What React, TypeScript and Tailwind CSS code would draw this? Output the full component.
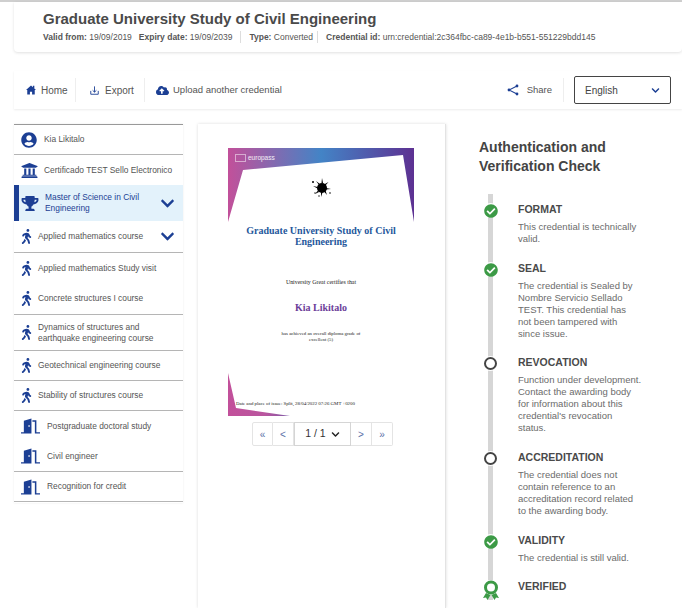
import type { ReactNode } from 'react';
import { FaCheckCircle, FaChevronDown, FaCloudUploadAlt, FaTrophy, FaUniversity, FaUserCircle, FaWalking } from 'react-icons/fa';

const blue = 'text-[#1c3f94]';

function Door() {
  return (
    <svg viewBox="0 0 20 16" className="h-[16px] w-[19px] fill-[#1c3f94]">
      <path d="M3 14.5V2.5L11 0v16H0v-1.5zM7.8 7.2h1.4v1.6H7.8z" fillRule="evenodd" />
      <path d="M12 2h4.2v12.5H20V16h-5.4V3.6H12z" />
    </svg>
  );
}

function Walker() {
  return <FaWalking className={`h-[15px] w-[11px] ${blue}`} />;
}

function NavRow({ icon, label, iconWidth, height, chevron, border = true }: {
  icon: ReactNode;
  label: string;
  iconWidth: string;
  height: string;
  chevron?: boolean;
  border?: boolean;
}) {
  return (
    <div className={`flex items-center ${height} ${border ? 'border-b border-[#b5b5b5]' : ''}`}>
      <div className={`flex shrink-0 items-center pl-[7px] ${iconWidth}`}>{icon}</div>
      <span className="flex-1 text-[8.4px] leading-[11px] text-[#555]">{label}</span>
      {chevron && <FaChevronDown className={`mr-[8px] h-[15px] w-[15px] ${blue}`} />}
    </div>
  );
}

function Check({ title, children, icon, height }: { title: string; children?: ReactNode; icon: ReactNode; height: string }) {
  return (
    <div className={`flex ${height}`}>
      <div className="w-[40px] shrink-0 pl-[5px]">
        <div className="mt-[1px] flex h-[15px] w-[15px] items-center justify-center rounded-full bg-white">{icon}</div>
      </div>
      <div className="w-[124px]">
        <h3 className="text-[10.5px] leading-[15px] font-bold text-[#4a4a4a]">{title}</h3>
        {children && <p className="mt-[4px] text-[9.5px] leading-[12px] text-[#6b6b6b]">{children}</p>}
      </div>
    </div>
  );
}

const done = <FaCheckCircle className="h-[14px] w-[14px] text-[#3c9a46]" />;
const open = <span className="block h-[13px] w-[13px] rounded-full border-2 border-[#444] bg-white" />;

export default function App() {
  return (
    <div className="h-[608px] w-[682px] overflow-hidden bg-white font-['Liberation_Sans',Arial,sans-serif]">
      <div className="h-[2px] bg-[#cfcfcf]" />
      <header className="ml-[14px] h-[50px] rounded-b-[4px] pt-[7px] pl-[29px] shadow-[0_1px_3px_rgba(0,0,0,0.12)]">
        <h1 className="text-[15px] leading-[20px] font-bold text-[#4a4a4a]">Graduate University Study of Civil Engineering</h1>
        <div className="mt-[2px] flex items-center text-[8.5px] leading-[12px] text-[#555]">
          <span><b>Valid from:</b> 19/09/2019</span>
          <span className="ml-[7px] border-r border-[#ddd] pr-[8px]"><b>Expiry date:</b> 19/09/2039</span>
          <span className="ml-[8px] border-r border-[#ddd] pr-[4px]"><b>Type:</b> Converted</span>
          <span className="ml-[8px]"><b>Credential id:</b> urn:credential:2c364fbc-ca89-4e1b-b551-551229bdd145</span>
        </div>
      </header>

      <nav className="mt-[19px] ml-[14px] flex h-[38px] items-center shadow-[0_1px_2px_rgba(0,0,0,0.08)]">
        <div className="flex h-[24px] w-[62px] items-center gap-[5px] border-r border-[#eee] pl-[12px] text-[10px] text-[#555]">
          <svg viewBox="0 0 12 12" className="h-[10px] w-[10px] fill-[#1c3f94]">
            <path d="M6 .5 0 6h1.5v5.5h3.2V8h2.6v3.5h3.2V6H12l-2-1.8V1H8.3v1.6z" />
          </svg>
          <span>Home</span>
        </div>
        <div className="flex h-[24px] w-[69px] items-center gap-[6px] border-r border-[#eee] pl-[14px] text-[10px] text-[#555]">
          <svg viewBox="0 0 12 12" className="h-[9px] w-[9px] fill-none stroke-[#1c3f94]" strokeWidth="1.2">
            <path d="M6 .5V8M3.5 5.8 6 8.2l2.5-2.4M1 6.5v4.5h10V6.5" />
          </svg>
          <span className="mt-[1px]">Export</span>
        </div>
        <div className="flex flex-1 items-center gap-[4px] pl-[11px] text-[9.5px] text-[#555]">
          <FaCloudUploadAlt className={`h-[13px] w-[13px] ${blue}`} /><span>Upload another credential</span>
        </div>
        <div className="flex h-[24px] items-center gap-[8px] border-r border-[#eee] pr-[11px] text-[9.5px] text-[#555]">
          <svg viewBox="0 0 12 12" className="h-[12px] w-[12px] fill-[#1c3f94] stroke-[#1c3f94]">
            <path d="M10 2 2 6l8 4" fill="none" strokeWidth="1.1" />
            <circle cx="10" cy="2" r="1.4" strokeWidth="0" /><circle cx="2" cy="6" r="1.4" strokeWidth="0" /><circle cx="10" cy="10" r="1.4" strokeWidth="0" />
          </svg>
          <span>Share</span>
        </div>
        <div className="mr-[11px] ml-[10px] flex h-[28px] w-[97px] items-center justify-between rounded-[2px] border border-[#444] pr-[10px] pl-[10px] text-[10px] text-[#444]">
          English
          <FaChevronDown className={`h-[9px] w-[9px] ${blue}`} />
        </div>
      </nav>

      <div className="mt-[15px] flex">
        <aside className="ml-[14px] h-[379px] w-[169px] border-t border-[#999] shadow-[0_0_2px_rgba(0,0,0,0.08)]">
          <NavRow icon={<FaUserCircle className={`h-[16px] w-[16px] ${blue}`} />} iconWidth="w-[30px]" height="h-[30px]" label="Kia Likitalo" />
          <NavRow icon={<FaUniversity className={`h-[17px] w-[17px] ${blue}`} />} iconWidth="w-[30px]" height="h-[30px]" label="Certificado TEST Sello Electronico" border={false} />
          <div className="flex h-[36px] items-center border-l-[5px] border-[#1c3f94] bg-[#e3f2fb]">
            <FaTrophy className={`ml-[2px] h-[15px] w-[18px] ${blue}`} />
            <span className={`ml-[6px] flex-1 text-[8.4px] leading-[11px] ${blue}`}>Master of Science in Civil Engineering</span>
            <FaChevronDown className={`mr-[8px] h-[15px] w-[15px] ${blue}`} />
          </div>
          <NavRow icon={<Walker />} iconWidth="w-[24px]" height="h-[32px]" label="Applied mathematics course" chevron />
          <NavRow icon={<Walker />} iconWidth="w-[24px]" height="h-[30px]" label="Applied mathematics Study visit" border={false} />
          <NavRow icon={<Walker />} iconWidth="w-[24px]" height="h-[32px]" label="Concrete structures I course" />
          <NavRow icon={<Walker />} iconWidth="w-[24px]" height="h-[36px]" label="Dynamics of structures and earthquake engineering course" />
          <NavRow icon={<Walker />} iconWidth="w-[24px]" height="h-[30px]" label="Geotechnical engineering course" />
          <NavRow icon={<Walker />} iconWidth="w-[24px]" height="h-[30px]" label="Stability of structures course" />
          <NavRow icon={<Door />} iconWidth="w-[33px]" height="h-[30px]" label="Postgraduate doctoral study" border={false} />
          <NavRow icon={<Door />} iconWidth="w-[33px]" height="h-[31px]" label="Civil engineer" />
          <NavRow icon={<Door />} iconWidth="w-[33px]" height="h-[30px]" label="Recognition for credit" />
        </aside>

        <main className="ml-[15px] h-[484px] w-[248px] border-r border-[#e3e3e3] pt-[24px] pl-[30px] shadow-[0_0_3px_rgba(0,0,0,0.14)]">
          <div className="w-[186px] text-center font-['Liberation_Serif',serif]">
            <div className="relative h-[74px]">
              <svg viewBox="0 0 186 74" className="block h-[74px] w-[186px]">
                <defs>
                  <linearGradient id="band" x1="0" x2="1" y1="0" y2="0">
                    <stop offset="0" stopColor="#c2509a" />
                    <stop offset="0.5" stopColor="#4384c6" />
                    <stop offset="1" stopColor="#5d3192" />
                  </linearGradient>
                </defs>
                <path d="M0 0H186V74L175 7 15 22 0 74z" fill="url(#band)" />
                <g fill="#000">
                  <circle cx="94" cy="40" r="5" />
                  <path d="M94 30 95 35 93.5 35zM100.5 34 97 38 96 36.5zM103 41 98 41.5 98 40zM99 47 96 43.5 97.5 42.5zM93 49 93 44 94.5 44.5zM87 46 90 42.5 91 44zM85 38 89.5 39 89.5 40.5zM88 33 92 36 91 37z" />
                  <circle cx="85" cy="34" r="1" /><circle cx="102" cy="45" r="0.8" /><circle cx="91" cy="48" r="0.7" /><circle cx="87" cy="45" r="0.7" />
                </g>
              </svg>
              <div className="absolute top-[6px] left-[7px] flex items-center gap-[2px] font-['Liberation_Sans',sans-serif] text-[6.5px] leading-[8px] text-white/90">
                <span className="h-[8px] w-[11px] border-[0.5px] border-white/50" />
                europass
              </div>
            </div>
            <h2 className="mt-[3px] text-[10px] leading-[11px] font-bold text-[#25589c]">Graduate University Study of Civil<br />Engineering</h2>
            <p className="mt-[32px] text-[5.9px] leading-[7px] text-[#222]">University Great certifies that</p>
            <p className="mt-[16px] text-[10px] leading-[12px] font-bold text-[#6b3d99]">Kia Likitalo</p>
            <p className="mt-[17px] text-[4.8px] leading-[5.5px] text-[#222]">has achieved an overall diploma grade of<br />excellent (5)</p>
            <div className="relative mt-[31px] h-[43px]">
              <svg viewBox="0 0 62 43" className="block h-[43px] w-[62px]">
                <defs>
                  <linearGradient id="foot" x1="0" x2="1" y1="0" y2="0">
                    <stop offset="0" stopColor="#c2509a" />
                    <stop offset="0.6" stopColor="#b9569f" />
                    <stop offset="1" stopColor="#7b5aa6" />
                  </linearGradient>
                </defs>
                <path d="M0 0 8 35 62 43H0z" fill="url(#foot)" />
              </svg>
              <p className="absolute top-[27px] left-[8px] text-[4.85px] leading-[7px] whitespace-nowrap text-[#222]">Date and place of issue: Split, 28/04/2022 07:26 GMT +0200</p>
            </div>
          </div>
          <div className="mt-[6px] ml-[24px] flex h-[24px] w-[141px] items-stretch text-[#5a70a8]">
            <span className="flex w-[21px] items-center justify-center rounded-l-[2px] border border-[#e4e4e4] text-[10px]">«</span>
            <span className="flex w-[21px] items-center justify-center border-y border-r border-[#e4e4e4] text-[10px]">&lt;</span>
            <span className="flex w-[57px] items-center justify-center gap-[5px] border border-[#d5d5d5] text-[10.5px] text-[#333]">
              1 / 1 <FaChevronDown className="h-[9px] w-[9px] text-[#222]" />
            </span>
            <span className="flex w-[21px] items-center justify-center border-y border-r border-[#e4e4e4] text-[10px]">&gt;</span>
            <span className="flex w-[21px] items-center justify-center rounded-r-[2px] border-y border-r border-[#e4e4e4] text-[10px]">»</span>
          </div>
        </main>

        <section className="flex-1 pt-[14px] pl-[33px]">
          <h2 className="text-[14px] leading-[19px] font-bold text-[#444]">Authentication and<br />Verification Check</h2>
          <div className="relative mt-[18px] -ml-[1px]">
            <span className="absolute top-0 left-[10px] h-[406px] w-[5px] bg-[#d6d6d6]" />
            <div className="relative pt-[8px]">
              <Check title="FORMAT" icon={done} height="h-[59px]">This credential is technically valid.</Check>
              <Check title="SEAL" icon={done} height="h-[94px]">The credential is Sealed by Nombre Servicio Sellado TEST. This credential has<br />not been tampered with since issue.</Check>
              <Check title="REVOCATION" icon={open} height="h-[95px]">Function under development. Contact the awarding body for information about this credential's revocation status.</Check>
              <Check title="ACCREDITATION" icon={open} height="h-[83px]">The credential does not contain reference to an accreditation record related to the awarding body.</Check>
              <Check title="VALIDITY" icon={done} height="h-[46px]">The credential is still valid.</Check>
              <Check title="VERIFIED" height="h-[24px]" icon={
                <svg viewBox="0 0 16 20" className="mt-[4px] h-[20px] w-[16px] shrink-0 fill-[#3c9a46]">
                  <path d="M3 13 0 18l3-.5 1.5 2.5L7.5 15zM13 13l3 5-3-.5-1.5 2.5L8.5 15z" />
                  <circle cx="8" cy="7.5" r="5.5" fill="none" stroke="#3c9a46" strokeWidth="3" />
                </svg>
              } />
            </div>
          </div>
        </section>
      </div>
    </div>
  );
}
